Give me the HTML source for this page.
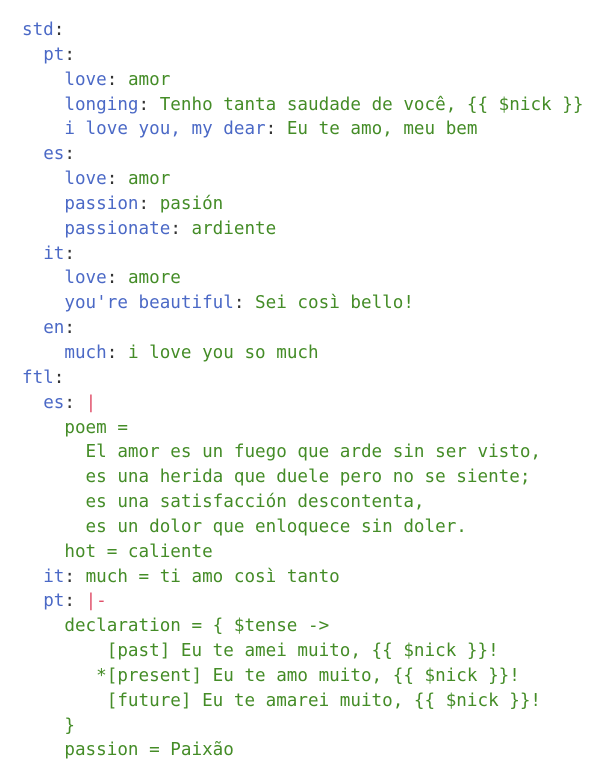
<!DOCTYPE html>
<html><head><meta charset="utf-8"><style>
html,body{margin:0;background:#fff;width:606px;height:777px;overflow:hidden}
pre{margin:0;position:absolute;left:22px;top:18px;font-family:"DejaVu Sans Mono","Liberation Mono",monospace;font-size:17.6px;line-height:24.85px;color:#333}
.k{color:#4b69c6}.s{color:#448c27}.p{color:#e0506a}
</style></head><body><pre><span class="k">std</span>:
  <span class="k">pt</span>:
    <span class="k">love</span>: <span class="s">amor</span>
    <span class="k">longing</span>: <span class="s">Tenho tanta saudade de você, {{ $nick }}</span>
    <span class="k">i love you, my dear</span>: <span class="s">Eu te amo, meu bem</span>
  <span class="k">es</span>:
    <span class="k">love</span>: <span class="s">amor</span>
    <span class="k">passion</span>: <span class="s">pasión</span>
    <span class="k">passionate</span>: <span class="s">ardiente</span>
  <span class="k">it</span>:
    <span class="k">love</span>: <span class="s">amore</span>
    <span class="k">you're beautiful</span>: <span class="s">Sei così bello!</span>
  <span class="k">en</span>:
    <span class="k">much</span>: <span class="s">i love you so much</span>
<span class="k">ftl</span>:
  <span class="k">es</span>: <span class="p">|</span>
<span class="s">    poem =
      El amor es un fuego que arde sin ser visto,
      es una herida que duele pero no se siente;
      es una satisfacción descontenta,
      es un dolor que enloquece sin doler.
    hot = caliente</span>
  <span class="k">it</span>: <span class="s">much = ti amo così tanto</span>
  <span class="k">pt</span>: <span class="p">|-</span>
<span class="s">    declaration = { $tense -&gt;
        [past] Eu te amei muito, {{ $nick }}!
       *[present] Eu te amo muito, {{ $nick }}!
        [future] Eu te amarei muito, {{ $nick }}!
    }
    passion = Paixão</span></pre></body></html>
